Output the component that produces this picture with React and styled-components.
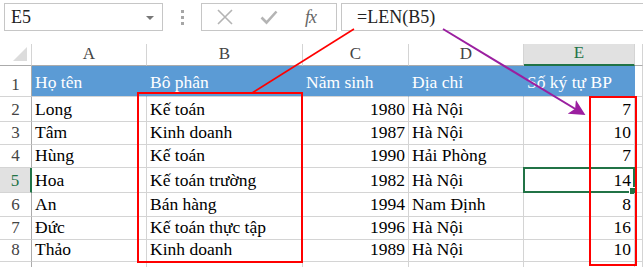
import React from 'react';
import styled, { createGlobalStyle } from 'styled-components';

const GlobalStyle = createGlobalStyle`
  * { box-sizing: border-box; }
  body {
    margin: 0;
    background: #ffffff;
    font-family: "Liberation Serif", "Times New Roman", serif;
  }
`;

const GRID = '#d4d4d4';
const GREEN = '#217346';
const BLUE = '#5b9bd5';

const Page = styled.div`
  position: relative;
  width: 643px;
  height: 267px;
  overflow: hidden;
  background: #fff;
`;

const Toolbar = styled.div`
  display: flex;
  align-items: center;
  height: 28px;
  margin-top: 3px;
  padding-left: 4px;
`;

const NameBox = styled.div`
  position: relative;
  display: flex;
  align-items: center;
  width: 159px;
  height: 28px;
  padding-left: 6px;
  border: 1px solid #c6c6c6;
  font-size: 18px;
  color: #222;
`;

const DropArrow = styled.span`
  position: absolute;
  right: 8px;
  top: 12px;
  width: 0;
  height: 0;
  border-left: 4px solid transparent;
  border-right: 4px solid transparent;
  border-top: 4px solid #777;
`;

const Dots = styled.div`
  display: flex;
  flex-direction: column;
  gap: 3px;
  margin: 0 17px 0 18px;

  span {
    width: 3px;
    height: 3px;
    background: #a6a6a6;
  }
`;

const FxButtons = styled.div`
  display: flex;
  align-items: center;
  width: 136px;
  height: 28px;
  padding-left: 14px;
  gap: 26px;
  border: 1px solid #c6c6c6;
`;

const FxLabel = styled.span`
  margin-left: 1px;
  font-size: 18px;
  font-style: italic;
  color: #666;
  letter-spacing: -1px;
`;

const FormulaInput = styled.div`
  flex: 1;
  display: flex;
  align-items: center;
  height: 28px;
  margin-left: 4px;
  padding-left: 15px;
  border: 1px solid #c6c6c6;
  border-right: none;
  font-size: 18px;
  color: #222;
`;

const Sheet = styled.div`
  display: grid;
  grid-template-columns: 32px 115px 156px 106px 115px 111px 1fr;
  grid-template-rows: 22px 31px 25px 23px 23px 25px 24px 23px 22px 20px;
  margin-top: 13px;
  font-size: 17.5px;
  color: #000;
`;

const Corner = styled.div`
  position: relative;
  border-right: 1px solid ${GRID};
  border-bottom: 1px solid #ababab;

  &::after {
    content: '';
    position: absolute;
    right: 4px;
    bottom: 4px;
    width: 0;
    height: 0;
    border-left: 14px solid transparent;
    border-bottom: 14px solid #dcdcdc;
  }
`;

const ColHead = styled.div`
  display: flex;
  align-items: flex-end;
  justify-content: center;
  padding-bottom: 1px;
  font-size: 17px;
  background: ${({ $active }) => ($active ? '#e1e1e1' : '#fff')};
  color: ${({ $active }) => ($active ? GREEN : '#444')};
  border-right: 1px solid ${GRID};
  border-bottom: ${({ $active }) => ($active ? `2px solid ${GREEN}` : '1px solid #ababab')};
`;

const RowHead = styled.div`
  display: flex;
  align-items: flex-end;
  justify-content: center;
  padding-bottom: 1px;
  font-size: 17px;
  background: ${({ $active }) => ($active ? '#e1e1e1' : '#fff')};
  color: ${({ $active }) => ($active ? GREEN : '#444')};
  border-right: ${({ $active }) => ($active ? `2px solid ${GREEN}` : '1px solid #ababab')};
  border-bottom: 1px solid ${GRID};
`;

const Cell = styled.div`
  position: relative;
  display: flex;
  align-items: flex-end;
  justify-content: ${({ $right }) => ($right ? 'flex-end' : 'flex-start')};
  padding: 0 3px 1px 3px;
  white-space: nowrap;
  border-right: 1px solid ${GRID};
  border-bottom: 1px solid ${GRID};
`;

const HeadCell = styled(Cell)`
  background: ${BLUE};
  color: #fff;
  border-right-color: ${BLUE};
  padding-bottom: 3px;
`;

const Selected = styled.div`
  position: absolute;
  left: -1px;
  top: -1px;
  right: -1px;
  bottom: -1px;
  border: 2px solid ${GREEN};

  &::after {
    content: '';
    position: absolute;
    right: -4px;
    bottom: -4px;
    width: 6px;
    height: 6px;
    background: ${GREEN};
    border: 1px solid #fff;
  }
`;

const Annotations = styled.svg`
  position: absolute;
  left: 0;
  top: 0;
  pointer-events: none;
`;

const columns = ['A', 'B', 'C', 'D', 'E'];

const rows = [
  ['Long', 'Kế toán', 1980, 'Hà Nội', 7],
  ['Tâm', 'Kinh doanh', 1987, 'Hà Nội', 10],
  ['Hùng', 'Kế toán', 1990, 'Hải Phòng', 7],
  ['Hoa', 'Kế toán trường', 1982, 'Hà Nội', 14],
  ['An', 'Bán hàng', 1994, 'Nam Định', 8],
  ['Đức', 'Kế toán thực tập', 1996, 'Hà Nội', 16],
  ['Thảo', 'Kinh doanh', 1989, 'Hà Nội', 10],
];

function CrossIcon() {
  return (
    <svg width="18" height="18" viewBox="0 0 18 18">
      <path d="M2 2 L16 16 M16 2 L2 16" stroke="#b4b4b4" strokeWidth="1.6" fill="none" />
    </svg>
  );
}

function CheckIcon() {
  return (
    <svg width="18" height="18" viewBox="0 0 18 18">
      <path d="M1.5 9.5 L6.5 14.5 L16.5 3.5" stroke="#b4b4b4" strokeWidth="2.6" fill="none" />
    </svg>
  );
}

export default function App() {
  return (
    <Page>
      <GlobalStyle />
      <Toolbar>
        <NameBox>
          E5
          <DropArrow />
        </NameBox>
        <Dots>
          <span />
          <span />
          <span />
        </Dots>
        <FxButtons>
          <CrossIcon />
          <CheckIcon />
          <FxLabel>fx</FxLabel>
        </FxButtons>
        <FormulaInput>=LEN(B5)</FormulaInput>
      </Toolbar>

      <Sheet>
        <Corner />
        {columns.map((c) => (
          <ColHead key={c} $active={c === 'E'}>{c}</ColHead>
        ))}
        <ColHead />

        <RowHead>1</RowHead>
        <HeadCell>Họ tên</HeadCell>
        <HeadCell>Bô phân</HeadCell>
        <HeadCell>Năm sinh</HeadCell>
        <HeadCell>Địa chỉ</HeadCell>
        <HeadCell>Số ký tự BP</HeadCell>
        <Cell />

        {rows.map((r, i) => (
          <React.Fragment key={r[0]}>
            <RowHead $active={i === 3}>{i + 2}</RowHead>
            <Cell>{r[0]}</Cell>
            <Cell>{r[1]}</Cell>
            <Cell $right>{r[2]}</Cell>
            <Cell>{r[3]}</Cell>
            <Cell $right>
              {r[4]}
              {i === 3 && <Selected />}
            </Cell>
            <Cell />
          </React.Fragment>
        ))}

        <RowHead />
        <Cell />
        <Cell />
        <Cell />
        <Cell />
        <Cell />
        <Cell />
      </Sheet>

      <Annotations width="643" height="267">
        <defs>
          <marker id="head" markerWidth="8" markerHeight="8" refX="6" refY="4" orient="auto" markerUnits="strokeWidth">
            <path d="M0 0 L8 4 L0 8 L2 4 Z" fill="#9b1fa0" />
          </marker>
        </defs>
        <rect x="138" y="93" width="164" height="169" fill="none" stroke="#ff0000" strokeWidth="2" />
        <rect x="590" y="97" width="46" height="168" fill="none" stroke="#ff0000" strokeWidth="2" />
        <line x1="252" y1="93" x2="354" y2="29" stroke="#ff0000" strokeWidth="1.5" />
        <line x1="443" y1="29" x2="582" y2="113" stroke="#9b1fa0" strokeWidth="2" markerEnd="url(#head)" />
      </Annotations>
    </Page>
  );
}
